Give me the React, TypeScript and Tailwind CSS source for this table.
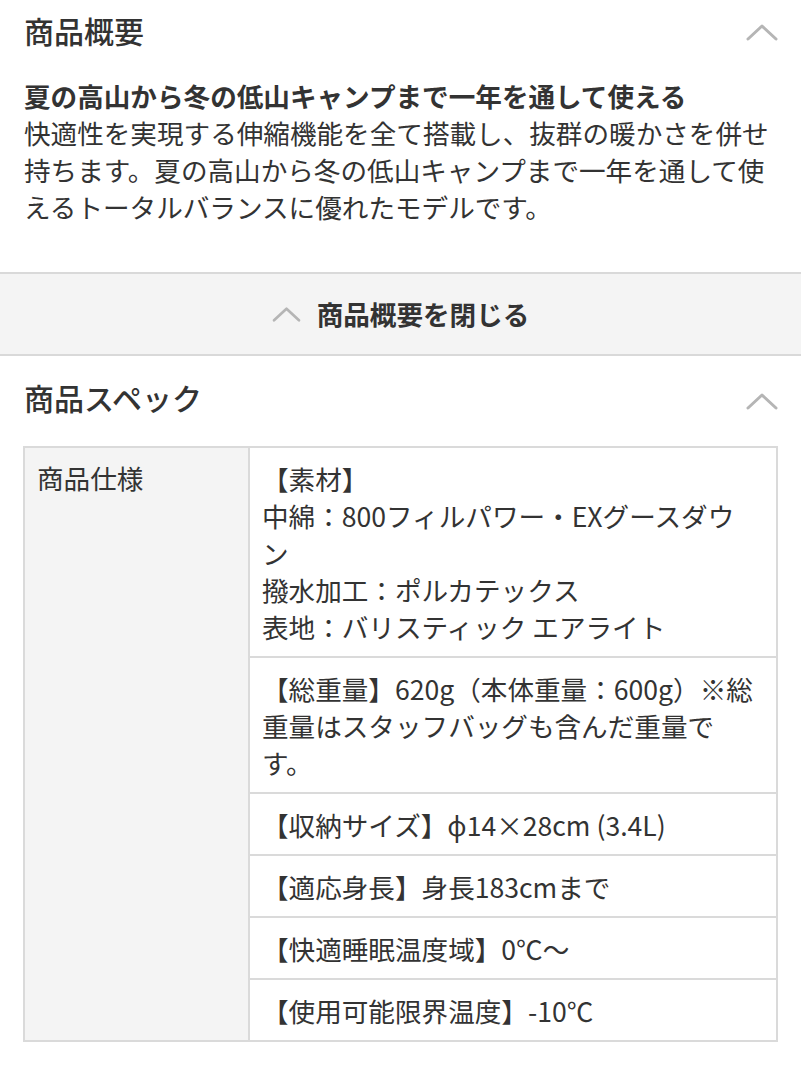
import React from 'react';

// --- ICONS ---
const ChevronUp = ({ className = '' }: { className?: string }) => (
  <svg
    className={className}
    viewBox="0 0 32 18"
    fill="none"
    stroke="#b5b5b5"
    strokeWidth="3"
    strokeLinecap="round"
    strokeLinejoin="round"
  >
    <polyline points="2,16 16,3 30,16" />
  </svg>
);

// --- DATA ---
const specRows: string[][] = [
  [
    '【素材】',
    '中綿：800フィルパワー・EXグースダウン',
    '撥水加工：ポルカテックス',
    '表地：バリスティック エアライト',
  ],
  ['【総重量】620g（本体重量：600g）※総重量はスタッフバッグも含んだ重量です。'],
  ['【収納サイズ】ϕ14×28cm (3.4L)'],
  ['【適応身長】身長183cmまで'],
  ['【快適睡眠温度域】0℃〜'],
  ['【使用可能限界温度】-10℃'],
];

export default function App() {
  return (
    <div
      className="w-[801px] bg-white text-[#333333]"
      style={{ fontFamily: '"Noto Sans CJK JP", "Noto Sans", sans-serif' }}
    >
      {/* 商品概要 */}
      <div className="flex h-[64px] items-center justify-between pl-[24px] pr-[23px]">
        <h2 className="mb-[5px] text-[30px] font-medium leading-[40px]">商品概要</h2>
        <ChevronUp className="h-[18px] w-[32px]" />
      </div>
      <div className="px-[24px] pt-[13px] pb-[47px] text-[26.6px] leading-[37px]">
        <p className="font-bold">夏の高山から冬の低山キャンプまで一年を通して使える</p>
        <p>
          快適性を実現する伸縮機能を全て搭載し、抜群の暖かさを併せ持ちます。夏の高山から冬の低山キャンプまで一年を通して使えるトータルバランスに優れたモデルです。
        </p>
      </div>

      <button className="flex h-[84px] w-full items-center justify-center gap-[16px] border-y-2 border-[#d9d9d9] bg-[#f4f4f4]">
        <ChevronUp className="h-[16px] w-[29px]" />
        <span className="text-[26.6px] font-bold leading-[38px] text-[#333333]">
          商品概要を閉じる
        </span>
      </button>

      {/* 商品スペック */}
      <div className="flex h-[86px] items-center justify-between pl-[24px] pr-[23px]">
        <h2 className="mb-[5px] text-[30px] font-medium leading-[40px]">商品スペック</h2>
        <ChevronUp className="mt-[4px] h-[18px] w-[32px]" />
      </div>

      <div className="mx-[23px] mt-[4px] flex border-2 border-[#dadada] text-[26.6px] leading-[37px]">
        <div className="w-[225px] shrink-0 border-r-2 border-[#dadada] bg-[#f4f4f4] px-[12px] py-[11px]">
          商品仕様
        </div>
        <div className="flex flex-1 flex-col">
          {specRows.map((lines, i) => (
            <div
              key={i}
              className="border-b-2 border-[#dadada] pt-[12px] pb-[11px] pl-[12px] pr-[17px] last:border-b-0"
            >
              {lines.map((line, j) => (
                <p key={j}>{line}</p>
              ))}
            </div>
          ))}
        </div>
      </div>
      <div className="h-[38px]" />
    </div>
  );
}
